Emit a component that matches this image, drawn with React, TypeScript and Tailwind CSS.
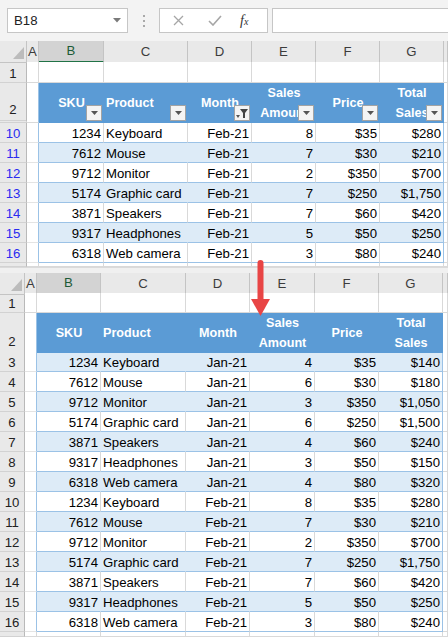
import React from "react";

type Rec = [string, string, string, string, string, string];

const rows: Rec[] = [
  ["1234", "Keyboard", "Jan-21", "4", "$35", "$140"],
  ["7612", "Mouse", "Jan-21", "6", "$30", "$180"],
  ["9712", "Monitor", "Jan-21", "3", "$350", "$1,050"],
  ["5174", "Graphic card", "Jan-21", "6", "$250", "$1,500"],
  ["3871", "Speakers", "Jan-21", "4", "$60", "$240"],
  ["9317", "Headphones", "Jan-21", "3", "$50", "$150"],
  ["6318", "Web camera", "Jan-21", "4", "$80", "$320"],
  ["1234", "Keyboard", "Feb-21", "8", "$35", "$280"],
  ["7612", "Mouse", "Feb-21", "7", "$30", "$210"],
  ["9712", "Monitor", "Feb-21", "2", "$350", "$700"],
  ["5174", "Graphic card", "Feb-21", "7", "$250", "$1,750"],
  ["3871", "Speakers", "Feb-21", "7", "$60", "$420"],
  ["9317", "Headphones", "Feb-21", "5", "$50", "$250"],
  ["6318", "Web camera", "Feb-21", "3", "$80", "$240"],
];

const TOP = "grid grid-cols-[27px_12px_65px_84px_64px_64px_64px_64px_1fr]";
const BOT = "grid grid-cols-[25px_12px_64px_85px_64px_65px_64px_64px_1fr]";

const rowHead = "bg-[#e9e9e9] border-r border-b border-r-[#b9b9b9] border-b-[#d2d2d2] flex items-end justify-center leading-[16px]";
const grid = "border-r border-b border-[#d9d9d9]";

function FilterBtn({ funnel = false }: { funnel?: boolean }) {
  return (
    <span className="absolute right-[2px] bottom-[2px] w-[16px] h-[16px] bg-[#f4f4f4] border border-[#a3a3a3] flex items-center justify-center">
      {funnel ? (
        <svg width="14" height="14" viewBox="0 0 14 14">
          <polygon points="1,9 5,9 3,12" fill="#555" />
          <polygon points="5,3 13,3 10,7 10,12 8,12 8,7" fill="#444" />
        </svg>
      ) : (
        <svg width="9" height="6" viewBox="0 0 9 6">
          <polygon points="1,1 8,1 4.5,5" fill="#555" />
        </svg>
      )}
    </span>
  );
}

function ColHeaders({ cols, h }: { cols: string; h: string }) {
  const letters = ["A", "B", "C", "D", "E", "F", "G", ""];
  return (
    <div className={`${cols} ${h}`}>
      <div className="bg-[#e9e9e9] border-r border-b border-[#c4c4c4] relative">
        <svg className="absolute right-[2px] bottom-[3px]" width="11" height="12" viewBox="0 0 11 12">
          <polygon points="11,0 11,12 0,12" fill="#bcbcbc" />
        </svg>
      </div>
      {letters.map((l, i) =>
        l === "B" ? (
          <div key={i} className="bg-[#d3d3d3] border-r border-[#c4c4c4] border-b-2 border-b-[#217346] flex items-center justify-center text-[#1d5b37]">
            {l}
          </div>
        ) : (
          <div key={i} className="bg-[#e9e9e9] border-r border-b border-[#c4c4c4] flex items-center justify-center text-[#3c3c3c]">
            {l}
          </div>
        )
      )}
    </div>
  );
}

function BlankRow({ cols, h, n }: { cols: string; h: string; n?: string }) {
  return (
    <div className={`${cols} ${h}`}>
      <div className={`${rowHead} text-[#222]`}>{n}</div>
      {Array.from({ length: 8 }).map((_, i) => (
        <div key={i} className={`bg-white ${grid}`} />
      ))}
    </div>
  );
}

function HeaderRow({ cols, h, filters }: { cols: string; h: string; filters: boolean }) {
  const cell = "relative bg-[#5b9bd5] text-white font-bold text-[12.6px] leading-[20px] flex items-center";
  return (
    <div className={`${cols} ${h}`}>
      <div className={`${rowHead} text-[#222] pb-[2px] ${filters ? "border-b-[3px] border-double border-b-[#a8a8a8]" : ""}`}>2</div>
      <div className="bg-white border-r border-r-[#9bc2e6] border-b border-b-[#d9d9d9]" />
      <div className={`${cell} justify-center`}>
        SKU{filters && <FilterBtn />}
      </div>
      <div className={`${cell} pl-[2px]`}>
        Product{filters && <FilterBtn />}
      </div>
      <div className={`${cell} justify-center`}>
        Month{filters && <FilterBtn funnel />}
      </div>
      <div className={`${cell} justify-center text-center`}>
        Sales Amount{filters && <FilterBtn />}
      </div>
      <div className={`${cell} justify-center`}>
        Price{filters && <FilterBtn />}
      </div>
      <div className={`${cell} justify-center text-center`}>
        Total Sales{filters && <FilterBtn />}
      </div>
      <div className={`bg-white ${grid}`} />
    </div>
  );
}

function DataRow({ cols, n, r, banded, blueNum }: { cols: string; n: number; r: Rec; banded: boolean; blueNum: boolean }) {
  const fill = banded ? "bg-[#ddebf7] border-r-[#ddebf7]" : "bg-white border-r-[#d9d9d9]";
  const c = `${fill} border-r border-b border-b-[#9bc2e6] flex items-end leading-[16px] px-[2px] whitespace-nowrap overflow-hidden`;
  return (
    <div className={`${cols} h-[20px]`}>
      <div className={`${rowHead} ${blueNum ? "text-[#2b2bf0]" : "text-[#222]"}`}>{n}</div>
      <div className="bg-white border-r border-r-[#9bc2e6] border-b border-b-[#e4e4e4]" />
      <div className={`${c} justify-end`}>{r[0]}</div>
      <div className={`${c} justify-start`}>{r[1]}</div>
      <div className={`${c} justify-end`}>{r[2]}</div>
      <div className={`${c} justify-end`}>{r[3]}</div>
      <div className={`${c} justify-end`}>{r[4]}</div>
      <div className={`${c} justify-end !border-r-[#9bc2e6]`}>{r[5]}</div>
      <div className={`bg-white ${grid}`} />
    </div>
  );
}

function FormulaBar() {
  return (
    <div className="h-[41px] bg-[#f3f3f3] flex items-start pt-[8px] pl-[7px]">
      <div className="w-[121px] h-[25px] bg-white border border-[#c6c6c6] flex items-center justify-between pl-[6px] pr-[6px]">
        <span className="text-[#222]">B18</span>
        <svg width="8" height="5" viewBox="0 0 8 5">
          <polygon points="0,0 8,0 4,4.5" fill="#7a7a7a" />
        </svg>
      </div>
      <div className="w-[31px] h-[25px] flex flex-col items-center justify-center gap-[3px]">
        <span className="w-[2px] h-[2px] bg-[#a9a9a9]" />
        <span className="w-[2px] h-[2px] bg-[#a9a9a9]" />
        <span className="w-[2px] h-[2px] bg-[#a9a9a9]" />
      </div>
      <div className="w-[109px] h-[25px] bg-white border border-[#c6c6c6] flex items-center">
        <svg className="ml-[13px]" width="11" height="11" viewBox="0 0 11 11">
          <path d="M1 1 L10 10 M10 1 L1 10" stroke="#a6a6a6" strokeWidth="1.3" />
        </svg>
        <svg className="ml-[24px]" width="14" height="11" viewBox="0 0 14 11">
          <path d="M1 6 L5 10 L13 1" stroke="#a6a6a6" strokeWidth="1.6" fill="none" />
        </svg>
        <span className="ml-[18px] font-['Liberation_Serif',serif] italic text-[14px] text-[#333] leading-none">
          f<span className="text-[10px]">x</span>
        </span>
      </div>
      <div className="ml-[4px] flex-1 h-[25px] bg-white border border-r-0 border-[#c6c6c6]" />
    </div>
  );
}

export default function App() {
  return (
    <div className="relative w-[448px] h-[637px] overflow-hidden bg-white font-['Liberation_Sans',Arial,sans-serif] text-[13.2px] text-black">
      {/* filtered view */}
      <div>
        <FormulaBar />
        <ColHeaders cols={TOP} h="h-[21px]" />
        <BlankRow cols={TOP} h="h-[21px]" n="1" />
        <HeaderRow cols={TOP} h="h-[40px]" filters />
        {rows.slice(7).map((r, i) => (
          <DataRow key={i} cols={TOP} n={10 + i} r={r} banded={i % 2 === 1} blueNum />
        ))}
        <BlankRow cols={TOP} h="h-[4px]" />
      </div>

      {/* full view */}
      <div>
        <div className="h-[6px] bg-[#f0f0f0] border-t border-[#dadada]" />
        <ColHeaders cols={BOT} h="h-[20px]" />
        <BlankRow cols={BOT} h="h-[20px]" n="1" />
        <HeaderRow cols={BOT} h="h-[39px]" filters={false} />
        {rows.map((r, i) => (
          <DataRow key={i} cols={BOT} n={3 + i} r={r} banded={i % 2 === 0} blueNum={false} />
        ))}
        <BlankRow cols={BOT} h="h-[5px]" />
      </div>

      {/* red arrow */}
      <svg className="absolute left-[250px] top-[258px]" width="22" height="60" viewBox="0 0 22 60">
        <rect x="7.5" y="2" width="6" height="42" rx="3" fill="#e84545" />
        <polygon points="1,41 20,41 10.5,58" fill="#e84545" />
      </svg>
    </div>
  );
}
